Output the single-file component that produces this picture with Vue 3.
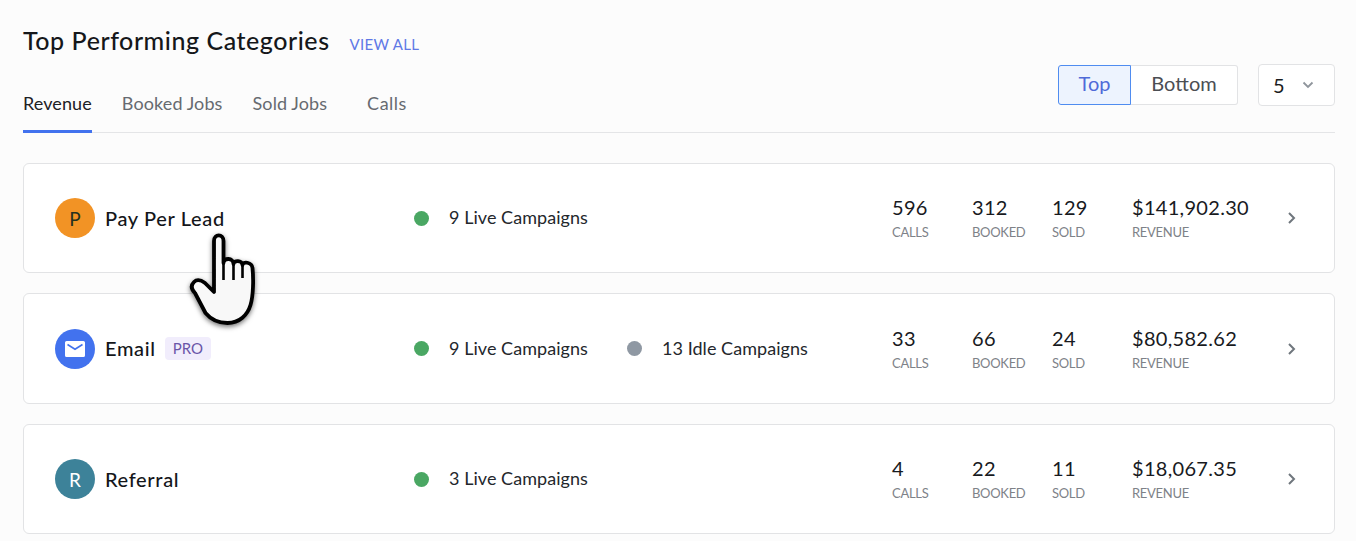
<script setup>
const tabs = [
  { label: 'Revenue', active: true },
  { label: 'Booked Jobs' },
  { label: 'Sold Jobs' },
  { label: 'Calls' }
]
const rows = [
  { name: 'Pay Per Lead', letter: 'P', cls: 'orange', live: '9 Live Campaigns', calls: 596, booked: 312, sold: 129, revenue: '$141,902.30' },
  { name: 'Email', icon: true, cls: 'blue', pro: true, live: '9 Live Campaigns', idle: '13 Idle Campaigns', calls: 33, booked: 66, sold: 24, revenue: '$80,582.62' },
  { name: 'Referral', letter: 'R', cls: 'teal', live: '3 Live Campaigns', calls: 4, booked: 22, sold: 11, revenue: '$18,067.35' }
]
</script>

<template>
  <div class="page">
    <header class="head">
      <div class="head-left">
        <div class="title-row">
          <h1 class="title">Top Performing Categories</h1>
          <a class="view-all">VIEW ALL</a>
        </div>
        <nav class="tabs">
          <span v-for="t in tabs" :key="t.label" class="tab" :class="{ active: t.active }">{{ t.label }}</span>
        </nav>
      </div>
      <div class="controls">
        <div class="toggle">
          <span class="tg tg-on">Top</span>
          <span class="tg tg-off">Bottom</span>
        </div>
        <div class="select">
          <span>5</span>
          <svg width="12" height="8" viewBox="0 0 12 8" fill="none"><path d="M1.500 1.500 6 6l4.500-4.500" stroke="#8f959c" stroke-width="1.800"/></svg>
        </div>
      </div>
    </header>

    <section class="list">
      <article v-for="r in rows" :key="r.name" class="card">
        <div class="who">
          <div class="avatar" :class="r.cls">
            <svg v-if="r.icon" width="22" height="18" viewBox="0 0 22 18"><path fill="#fff" d="M2.600 1h16.800A1.600 1.600 0 0 1 21 2.600v12.800a1.600 1.600 0 0 1-1.600 1.600H2.600A1.600 1.600 0 0 1 1 15.400V2.600A1.600 1.600 0 0 1 2.600 1Z"/><path d="M3.500 4.500 11 9.200l7.500-4.700" fill="none" stroke="#4272ee" stroke-width="1.600"/></svg>
            <span v-else>{{ r.letter }}</span>
          </div>
          <span class="name">{{ r.name }}</span>
          <span v-if="r.pro" class="pro">PRO</span>
        </div>
        <div class="status">
          <span class="dot green"></span><span class="stxt live">{{ r.live }}</span>
          <template v-if="r.idle"><span class="dot gray"></span><span class="stxt">{{ r.idle }}</span></template>
        </div>
        <div class="stats">
          <div class="stat"><b>{{ r.calls }}</b><small>CALLS</small></div>
          <div class="stat"><b>{{ r.booked }}</b><small>BOOKED</small></div>
          <div class="stat"><b>{{ r.sold }}</b><small>SOLD</small></div>
          <div class="stat rev"><b>{{ r.revenue }}</b><small>REVENUE</small></div>
        </div>
        <svg class="chev" width="10" height="14" viewBox="0 0 10 14" fill="none"><path d="M2 2l5 5-5 5" stroke="#6f767d" stroke-width="2"/></svg>
      </article>
    </section>

    <svg class="cursor" width="85" height="108" viewBox="0 0 85 108">
      <defs>
        <filter id="sh" x="-30%" y="-30%" width="160%" height="160%"><feDropShadow dx="0" dy="2" stdDeviation="2.500" flood-color="#000" flood-opacity=".55"/></filter>
      </defs>
      <path filter="url(#sh)" fill="#f8f8f8" stroke="#000" stroke-width="3.800" stroke-linejoin="round" d="M34 11c0-7.500 9.500-7.500 9.500 0V33c0-5.500 10-5.500 10 1 0-4 9-4 9 1 0-4 9.500-3 10 3 1 10 1 27-2 37-3 10-11 18-23 18-10 0-17-4-22-10L15 63c-4-4-4-8-1-11 3-3 7-2 11 1l9 9V11Z"/>
      <path d="M43.500 33v17M53.500 34v16M62.500 35v13" stroke="#000" stroke-width="2.600" fill="none"/>
    </svg>
  </div>
</template>

<style>
html, body { margin: 0; background: #fcfcfc; }
</style>

<style scoped>
.page {
  position: relative;
  width: 1356px;
  height: 541px;
  overflow: hidden;
  box-sizing: border-box;
  padding: 0 21px 0 23px;
  background: #fcfcfc;
  font-family: "Lato", "Noto Sans", sans-serif;
  color: #1b1d21;
}
.head {
  display: flex;
  justify-content: space-between;
  align-items: flex-end;
  border-bottom: 1px solid #e4e5e7;
  height: 133px;
  box-sizing: border-box;
}
.title-row {
  display: flex;
  align-items: baseline;
  gap: 20px;
  padding-top: 25px;
  height: 52px;
}
.title {
  margin: 0;
  font-family: "Lato", sans-serif;
  font-weight: 500;
  font-size: 25px;
  line-height: 30px;
  letter-spacing: 0.55px;
  color: #15171a;
}
.view-all { font-size: 15px; letter-spacing: 0.3px; color: #5f78e6; }
.tabs { display: flex; gap: 30px; margin-bottom: -1px; }
.tab {
  height: 56px;
  box-sizing: border-box;
  padding-top: 15px;
  font-size: 18px;
  line-height: 22px;
  letter-spacing: 0.1px;
  color: #666a70;
  white-space: nowrap;
}
.tab.active { color: #1d2024; border-bottom: 3px solid #4272ee; }
.tab:last-child { margin-left: 10px; letter-spacing: 0.5px; }
.controls { display: flex; gap: 20px; align-items: center; margin-bottom: 26px; }
.toggle { display: flex; height: 40px; font-size: 20px; }
.tg { display: flex; align-items: center; justify-content: center; box-sizing: border-box; padding-bottom: 4px; }
.tg-on {
  width: 73px;
  background: #edf3fe;
  border: 1px solid #4f8cf0;
  border-radius: 3px 0 0 3px;
  color: #4f6ad8;
}
.tg-off {
  width: 107px;
  background: #fff;
  border: 1px solid #e2e3e5;
  border-left: 0;
  border-radius: 0 3px 3px 0;
  color: #4b4e53;
}
.select {
  width: 77px;
  height: 42px;
  box-sizing: border-box;
  display: flex;
  align-items: center;
  gap: 17px;
  padding-left: 14px;
  background: #fff;
  border: 1px solid #e2e3e5;
  border-radius: 4px;
  font-size: 20px;
}
.list { display: flex; flex-direction: column; gap: 20.090px; margin-top: 30px; }
.card {
  height: 110.400px;
  box-sizing: border-box;
  display: flex;
  align-items: center;
  padding-left: 31px;
  background: #fff;
  border: 1px solid #e2e3e5;
  border-radius: 6px;
}
.who { width: 359px; display: flex; align-items: center; }
.avatar {
  width: 40px;
  height: 40px;
  border-radius: 50%;
  display: flex;
  align-items: center;
  justify-content: center;
  font-size: 19px;
  margin-right: 10px;
}
.orange { background: #f29325; color: #24311f; }
.blue { background: #4272ee; }
.teal { background: #3d8299; color: #fff; }
.name { font-size: 20px; font-weight: 500; letter-spacing: 0.65px; color: #14161a; margin-top: -0.6px; }
.pro {
  margin-left: 9px;
  padding: 0 8px;
  height: 23px;
  line-height: 23px;
  background: #f1edfc;
  border-radius: 4px;
  font-size: 15px;
  color: #6a55a8;
}
.status { width: 478px; display: flex; align-items: center; font-size: 18px; letter-spacing: 0.05px; color: #24272c; margin-top: -2px; }
.dot { width: 15px; height: 15px; border-radius: 50%; margin-right: 20px; margin-top: 2px; }
.green { background: #4aa763; }
.gray { background: #8f98a3; }
.live { width: 178px; }
.stats { display: flex; }
.stat { width: 80px; display: flex; flex-direction: column; }
.stat.rev { width: 155px; }
.stat b { font-weight: 400; font-size: 20px; line-height: 26px; letter-spacing: 0.3px; color: #181a1e; margin-top: -1px; }
.stat small { font-size: 13px; line-height: 20px; letter-spacing: -0.3px; color: #7e8288; margin-top: 2px; margin-bottom: -1px; }
.cursor { position: absolute; left: 180px; top: 230px; }
</style>
